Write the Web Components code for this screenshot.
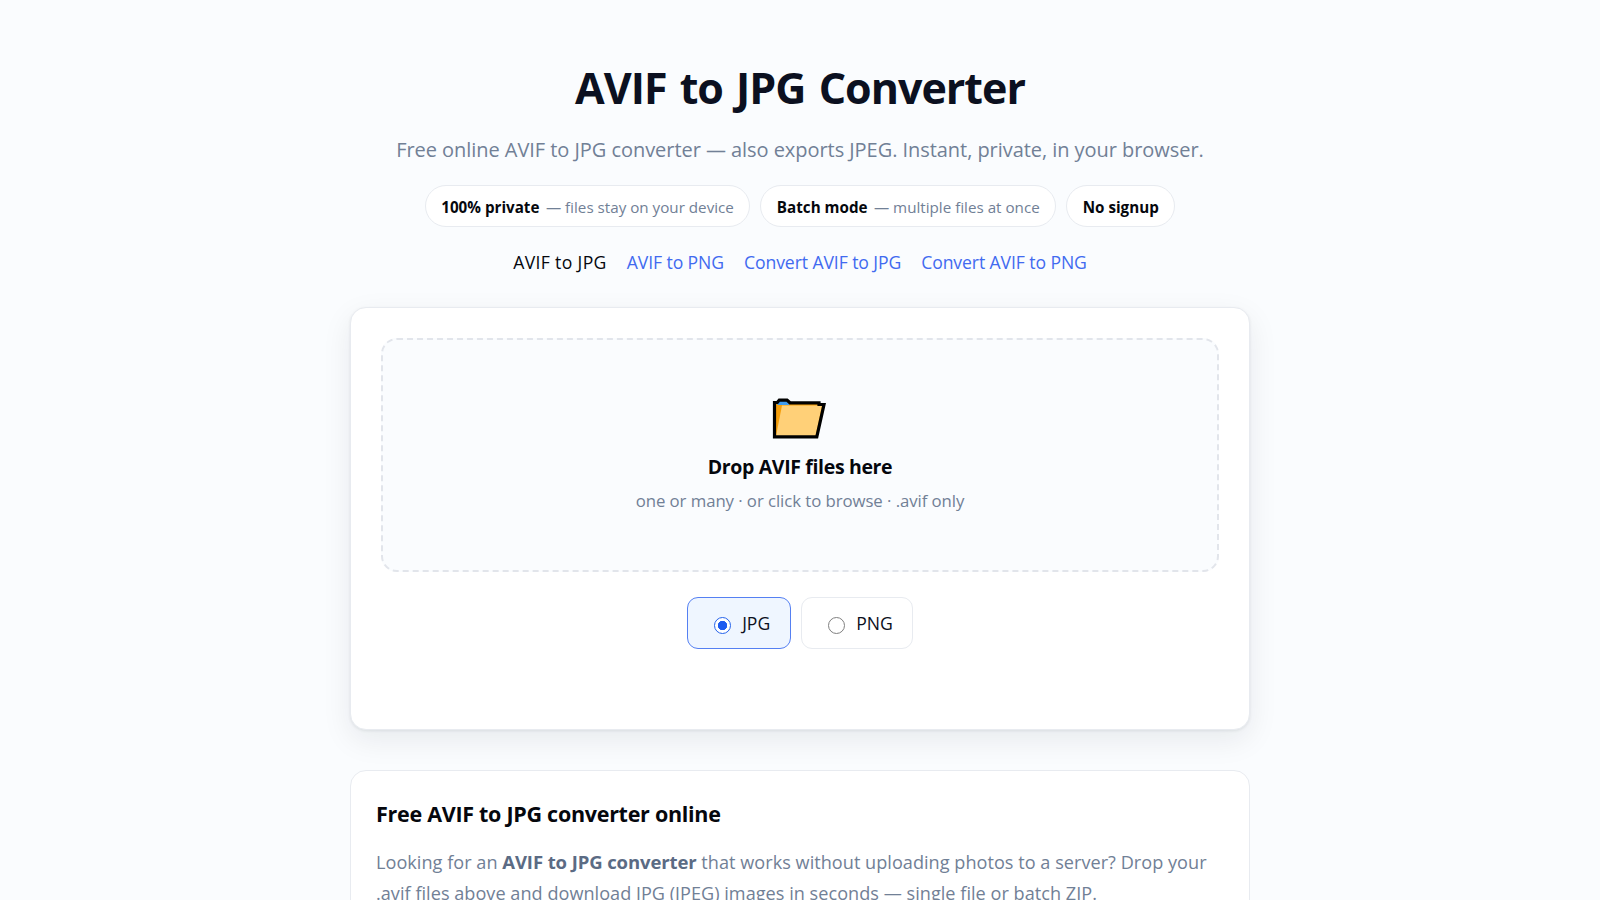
<!DOCTYPE html>
<html lang="en">
<head>
<meta charset="utf-8">
<title>AVIF to JPG Converter</title>
<style>
  body {
    margin: 0;
    height: 900px;
    overflow: hidden;
    background: #fafcfe;
    color: #0b1020;
    font-family: "Open Sans", "Noto Sans", sans-serif;
  }
</style>
</head>
<body>
<converter-page></converter-page>

<script>
class PrivacyBadge extends HTMLElement {
  constructor() {
    super();
    this.attachShadow({ mode: "open" });
  }

  connectedCallback() {
    this.shadowRoot.innerHTML = /* html */`
    <style>
      :host {
        display: flex;
        align-items: center;
        gap: 6.5px;
        box-sizing: border-box;
        height: 42px;
        padding: 1px 15.5px 0;
        border: 1px solid #e8ebf0;
        border-radius: 21px;
        background: #fff;
        color: #718096;
        font-size: 15.2px;
        white-space: nowrap;
      }

      ::slotted(b) {
        color: #05070d;
        font-size: 15.2px;
        font-weight: 700;
      }
    </style>
    <slot></slot>`;
  }
}

class NavLinks extends HTMLElement {
  constructor() {
    super();
    this.attachShadow({ mode: "open" });
  }

  connectedCallback() {
    this.shadowRoot.innerHTML = /* html */`
    <style>
      :host {
        display: flex;
        justify-content: center;
        gap: 20px;
        font-size: 17.6px;
        line-height: 28px;
      }

      ::slotted(a) {
        color: #416af0;
        letter-spacing: -0.09px;
        text-decoration: none;
      }

      ::slotted(a.active) {
        color: #05070d;
        font-weight: 500;
        letter-spacing: 0.35px;
      }
    </style>
    <slot></slot>`;
  }
}

class FolderIcon extends HTMLElement {
  constructor() {
    super();
    this.attachShadow({ mode: "open" });
  }

  connectedCallback() {
    this.shadowRoot.innerHTML = /* html */`
    <style>
      :host { display: block; width: 56px; height: 41px; }
      svg { display: block; }
    </style>
    <svg width="56" height="41" viewBox="0 0 56 41">
      <path d="M2.500 38.800V4.500H5L7 2H15L18 4.500H47V6.500H52.500L45 38.800Z" fill="#f59e0b"/>
      <path d="M5.500 7V4.500L7.500 3H15L17.500 7Z" fill="#3f9cf0"/>
      <path d="M10 7.500H50L43.500 38H4Z" fill="#ffd078"/>
      <path d="M2.500 38.800V4.500H5.300L7.300 2.100H15L18 4.800H47V6.500H52L44.800 38.800Z" fill="none" stroke="#000" stroke-width="3.200"/>
    </svg>`;
  }
}

class DropZone extends HTMLElement {
  constructor() {
    super();
    this.attachShadow({ mode: "open" });
  }

  connectedCallback() {
    this.shadowRoot.innerHTML = /* html */`
    <style>
      :host {
        display: flex;
        flex-direction: column;
        align-items: center;
        box-sizing: border-box;
        height: 234px;
        padding-top: 58px;
        border: 2px dashed #e2e5eb;
        border-radius: 16px;
        background: #fafcfe;
      }

      .title {
        margin-top: 13px;
        color: #05070d;
        font-size: 19.5px;
        font-weight: 700;
        line-height: 30px;
        letter-spacing: -0.35px;
      }

      .hint {
        margin-top: 6px;
        color: #718096;
        font-size: 16.8px;
        line-height: 26px;
        letter-spacing: -0.07px;
      }
    </style>
    <folder-icon></folder-icon>
    <div class="title"><slot name="title"></slot></div>
    <div class="hint"><slot name="hint"></slot></div>`;
  }
}

class FormatOption extends HTMLElement {
  constructor() {
    super();
    this.attachShadow({ mode: "open" });
  }

  connectedCallback() {
    this.shadowRoot.innerHTML = /* html */`
    <style>
      :host {
        display: flex;
        align-items: center;
        gap: 11.5px;
        box-sizing: border-box;
        height: 52px;
        padding: 0 19.5px 0 26px;
        border: 1px solid #e8ebf0;
        border-radius: 11px;
        background: #fff;
        font-size: 17.6px;
      }

      :host([checked]) {
        border-color: #5580f2;
        background: #eff6ff;
      }

      .radio {
        box-sizing: border-box;
        width: 17px;
        height: 17px;
        margin-top: 5px;
        border: 1.5px solid #808080;
        border-radius: 50%;
        background: #fff;
      }

      :host([checked]) .radio {
        border-color: #2563eb;
        background: radial-gradient(circle, #1d5cf0 4.4px, #fff 5px);
      }
    </style>
    <span class="radio"></span>
    <slot></slot>`;
  }
}

class SurfaceCard extends HTMLElement {
  constructor() {
    super();
    this.attachShadow({ mode: "open" });
  }

  connectedCallback() {
    this.shadowRoot.innerHTML = /* html */`
    <style>
      :host {
        display: block;
        box-sizing: border-box;
        border: 1px solid #e8ebf0;
        border-radius: 16px;
        background: #fff;
      }

      :host([raised]) {
        box-shadow: 0 10px 30px rgba(15, 23, 42, 0.08), 0 1px 3px rgba(15, 23, 42, 0.08);
      }
    </style>
    <slot></slot>`;
  }
}

class ConverterPage extends HTMLElement {
  constructor() {
    super();
    this.attachShadow({ mode: "open" });
  }

  static get styles() {
    return /* css */`
      :host {
        display: block;
        width: 900px;
        margin: 0 auto;
        padding-top: 63px;
      }

      h1 {
        margin: 0;
        font-size: 43px;
        font-weight: 700;
        line-height: 50px;
        letter-spacing: -1px;
        word-spacing: 3px;
        text-align: center;
      }

      .subtitle {
        margin: 21px 0 0;
        color: #718096;
        font-size: 20px;
        line-height: 32px;
        letter-spacing: -0.05px;
        text-align: center;
      }

      .badges {
        display: flex;
        justify-content: center;
        gap: 10px;
        margin-top: 19px;
      }

      nav-links { margin-top: 21px; }

      .converter {
        height: 423px;
        margin-top: 31px;
        padding: 30px;
      }

      .formats {
        display: flex;
        justify-content: center;
        gap: 10px;
        margin-top: 25px;
      }

      .about {
        height: 240px;
        margin-top: 40px;
        padding: 28px 25px;
      }

      h2 {
        margin: 0;
        color: #05070d;
        font-size: 21.5px;
        font-weight: 700;
        line-height: 30px;
        letter-spacing: -0.28px;
      }

      .about p {
        margin: 18px 0 0;
        color: #718096;
        font-size: 18.1px;
        line-height: 31px;
        letter-spacing: 0.03px;
      }

      .about strong {
        color: #5b6b84;
        font-size: 18.5px;
        font-weight: 700;
        line-height: 1;
        letter-spacing: -0.1px;
      }
    `;
  }

  connectedCallback() {
    this.shadowRoot.innerHTML = /* html */`
    <style>${ConverterPage.styles}</style>
    <h1>AVIF to JPG Converter</h1>
    <p class="subtitle">Free online AVIF to JPG converter — also exports JPEG. Instant, private, in your browser.</p>
    <div class="badges">
      <privacy-badge><b>100% private</b> — files stay on your device</privacy-badge>
      <privacy-badge><b>Batch mode</b> — multiple files at once</privacy-badge>
      <privacy-badge><b>No signup</b></privacy-badge>
    </div>
    <nav-links>
      <a class="active">AVIF to JPG</a>
      <a href="#png">AVIF to PNG</a>
      <a href="#convert-jpg">Convert AVIF to JPG</a>
      <a href="#convert-png">Convert AVIF to PNG</a>
    </nav-links>
    <surface-card class="converter" raised>
      <drop-zone>
        <span slot="title">Drop AVIF files here</span>
        <span slot="hint">one or many · or click to browse · .avif only</span>
      </drop-zone>
      <div class="formats">
        <format-option checked>JPG</format-option>
        <format-option>PNG</format-option>
      </div>
    </surface-card>
    <surface-card class="about">
      <h2>Free AVIF to JPG converter online</h2>
      <p>Looking for an <strong>AVIF to JPG converter</strong> that works without uploading photos to a server? Drop your .avif files above and download JPG (JPEG) images in seconds — single file or batch ZIP.</p>
    </surface-card>`;
  }
}

customElements.define("privacy-badge", PrivacyBadge);
customElements.define("nav-links", NavLinks);
customElements.define("folder-icon", FolderIcon);
customElements.define("drop-zone", DropZone);
customElements.define("format-option", FormatOption);
customElements.define("surface-card", SurfaceCard);
customElements.define("converter-page", ConverterPage);
</script>
</body>
</html>
